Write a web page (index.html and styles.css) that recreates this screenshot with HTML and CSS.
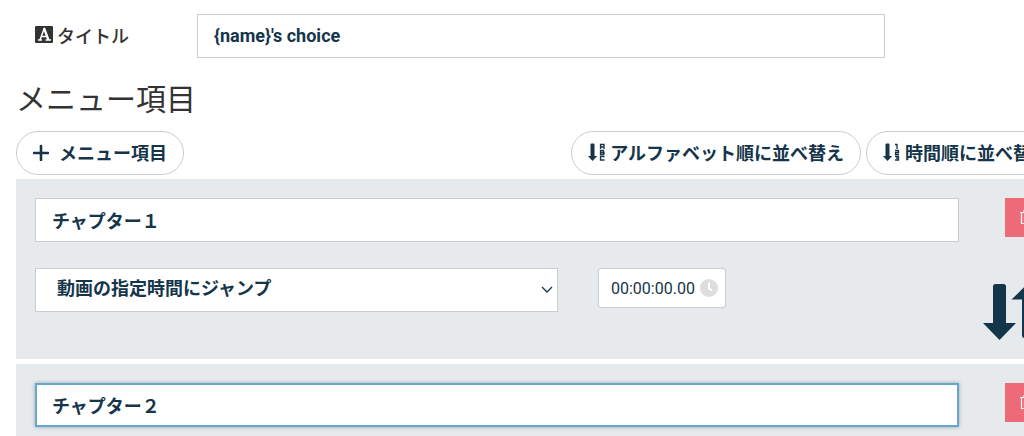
FILE: index.html
```html
<!DOCTYPE html>
<html lang="ja">
<head>
    <meta charset="UTF-8">
    <meta name="viewport" content="width=device-width, initial-scale=1.0">
    <title>メニュー項目</title>
    <link rel="stylesheet" href="styles.css">
</head>
<body>
    <main class="editor">
        <div class="title-row">
            <label class="title-label" for="title">
                <svg width="18" height="18" viewBox="0 0 18 18" aria-hidden="true">
                    <rect width="18" height="17" rx="1" fill="#333"/>
                    <path d="M3 14h4M10.500 14H16M5 14L9.200 2.500M6.500 10.500H12" fill="none" stroke="#fff" stroke-width="1.500"/>
                    <path d="M9 2l4.500 12" stroke="#fff" stroke-width="2.200"/>
                </svg>
                タイトル
            </label>
            <input class="field" id="title" type="text" value="{name}'s choice">
        </div>

        <h2 class="heading">メニュー項目</h2>

        <div class="toolbar">
            <button class="pill add" type="button">
                <svg width="16" height="18" viewBox="0 0 16 18" aria-hidden="true">
                    <path d="M8 3v14M1 10h14" stroke="currentColor" stroke-width="2.600" stroke-linecap="round"/>
                </svg>
                メニュー項目
            </button>
            <div class="sort">
                <button class="pill" type="button">
                    <svg width="18" height="18" viewBox="0 0 18 18" aria-hidden="true">
                        <path d="M2.500 1.500a1 1 0 0 1 1-1H5.500a1 1 0 0 1 1 1V13H9.200L4.500 18L0 13h2.500z" fill="currentColor"/>
                        <path d="M12.500 6V1.500H16V6M12.500 4H16M12.500 7.500H15.500V11.500H12.500zM12.500 9.500H16V11.500M16.500 13.500h-4v3.500h4" fill="none" stroke="currentColor" stroke-width="1.300"/>
                    </svg>
                    アルファベット順に並べ替え
                </button>
                <button class="pill" type="button">
                    <svg width="18" height="18" viewBox="0 0 18 18" aria-hidden="true">
                        <path d="M2.500 1.500a1 1 0 0 1 1-1H5.500a1 1 0 0 1 1 1V13H9.200L4.500 18L0 13h2.500z" fill="currentColor"/>
                        <path d="M12 1.500h2V6M12 7.500h3.500v2h-3v2H16M12 13.500h3.500V17H12M13 15.200h2.500" fill="none" stroke="currentColor" stroke-width="1.300"/>
                    </svg>
                    時間順に並べ替え
                </button>
            </div>
        </div>

        <section class="item">
            <input class="field" type="text" value="チャプター１" aria-label="項目名 1">
            <button class="delete" type="button" aria-label="削除">
                <svg width="12" height="15" viewBox="0 0 12 15" aria-hidden="true">
                    <path d="M0 2.500h12M4 2V.5h4V2M1.500 3v10.500h9V3M4.500 5.500v6M7.500 5.500v6" fill="none" stroke="currentColor" stroke-width="1.200"/>
                </svg>
            </button>
            <div class="action">
                <div class="select">
                    <select class="field" aria-label="動作">
                        <option>動画の指定時間にジャンプ</option>
                    </select>
                    <svg class="chevron" width="14" height="8" viewBox="0 0 14 8" aria-hidden="true">
                        <path d="M2 1L7 6L12 1" fill="none" stroke="currentColor" stroke-width="1.300"/>
                    </svg>
                </div>
                <div class="time">
                    <input type="text" value="00:00:00.00" aria-label="時間">
                    <svg width="18" height="18" viewBox="0 0 18 18" aria-hidden="true">
                        <circle cx="9" cy="9" r="9" fill="#ddd"/>
                        <path d="M9 3.500V9.500L12 11.500" fill="none" stroke="#fff" stroke-width="2"/>
                    </svg>
                </div>
            </div>
            <button class="move" type="button" aria-label="並べ替え">
                <svg width="62" height="56" viewBox="0 0 62 56" aria-hidden="true">
                    <path d="M12.500 0h8a2.500 2.500 0 0 1 2.500 2.500V39h10L16.500 56L0 39h10V2.500A2.500 2.500 0 0 1 12.500 0z" fill="currentColor"/>
                    <path d="M41.500 54h8a2.500 2.500 0 0 0 2.500-2.500V15.500h10L45.500-1L28.500 15.500H39v36a2.500 2.500 0 0 0 2.500 2.500z" fill="currentColor"/>
                </svg>
            </button>
        </section>

        <section class="item">
            <input class="field active" type="text" value="チャプター２" aria-label="項目名 2">
            <button class="delete" type="button" aria-label="削除">
                <svg width="12" height="15" viewBox="0 0 12 15" aria-hidden="true">
                    <path d="M0 2.500h12M4 2V.5h4V2M1.500 3v10.500h9V3M4.500 5.500v6M7.500 5.500v6" fill="none" stroke="currentColor" stroke-width="1.200"/>
                </svg>
            </button>
        </section>
    </main>
</body>
</html>
```

FILE: styles.css
```css
* {
    box-sizing: border-box;
    margin: 0;
    padding: 0;
}

body {
    background: #fff;
    color: #333;
    font-family: Roboto, "Noto Sans CJK JP", sans-serif;
    font-size: 18px;
    overflow: hidden;
}

input,
select,
button {
    color: #15354a;
    font: inherit;
}

svg {
    display: block;
    flex: none;
}

/* the panel runs past the right edge of the window */
.editor {
    margin: 14px -42px 0 16px;
}

.title-row {
    display: grid;
    grid-template-columns: 162px 1fr;
    align-items: center;
    padding: 0 181px 0 19px;
}

.title-label {
    display: flex;
    align-items: center;
    gap: 4px;
    padding-bottom: 2px;
    font-weight: 500;
}

.field {
    width: 100%;
    height: 44px;
    padding: 0 16px 1px;
    background: #fff;
    border: 1px solid #c4ced3;
    border-radius: 0;
    font-weight: bold;
    outline: none;
}

.field.active {
    border: 2px solid #62a8d1;
    padding: 0 15px;
    box-shadow: 0 0 4px rgba(0, 0, 0, 0.3);
}

.heading {
    margin: 20px 0 9px;
    font-size: 30px;
    font-weight: normal;
    line-height: 44px;
}

.toolbar {
    display: flex;
    justify-content: space-between;
    margin-bottom: 4px;
}

.sort {
    display: flex;
    gap: 5px;
}

.pill {
    display: flex;
    align-items: center;
    gap: 4px;
    height: 44px;
    padding: 0 16px 3px;
    background: #fff;
    border: 1px solid #c4ced3;
    border-radius: 22px;
    font-weight: bold;
    white-space: nowrap;
}

.add {
    gap: 10px;
}

.item {
    display: grid;
    grid-template-columns: 1fr 64px;
    gap: 26px 23px;
    margin-bottom: 5px;
    padding: 19px 20px 19px 19px;
    background: #e6eaed;
}

.delete {
    display: flex;
    align-items: center;
    justify-content: center;
    justify-self: end;
    width: 41px;
    height: 39px;
    background: #ed6b78;
    border: none;
    color: #fff;
}

.action {
    display: grid;
    grid-template-columns: 1fr 128px;
    gap: 40px;
    align-items: start;
    padding-right: 233px;
}

.select {
    position: relative;
}

.select .field {
    padding: 0 21px 3px;
    appearance: none;
}

.chevron {
    position: absolute;
    top: 18px;
    right: 4px;
    color: #15354a;
    pointer-events: none;
}

.time {
    display: flex;
    align-items: center;
    height: 40px;
    padding: 0 7px 0 12px;
    background: #fff;
    border: 1px solid #c4ced3;
    border-radius: 3px;
}

.time input {
    flex: 1;
    min-width: 0;
    border: none;
    font-size: 16px;
    outline: none;
}

.move {
    justify-self: center;
    margin-top: 16px;
    background: none;
    border: none;
}
```
